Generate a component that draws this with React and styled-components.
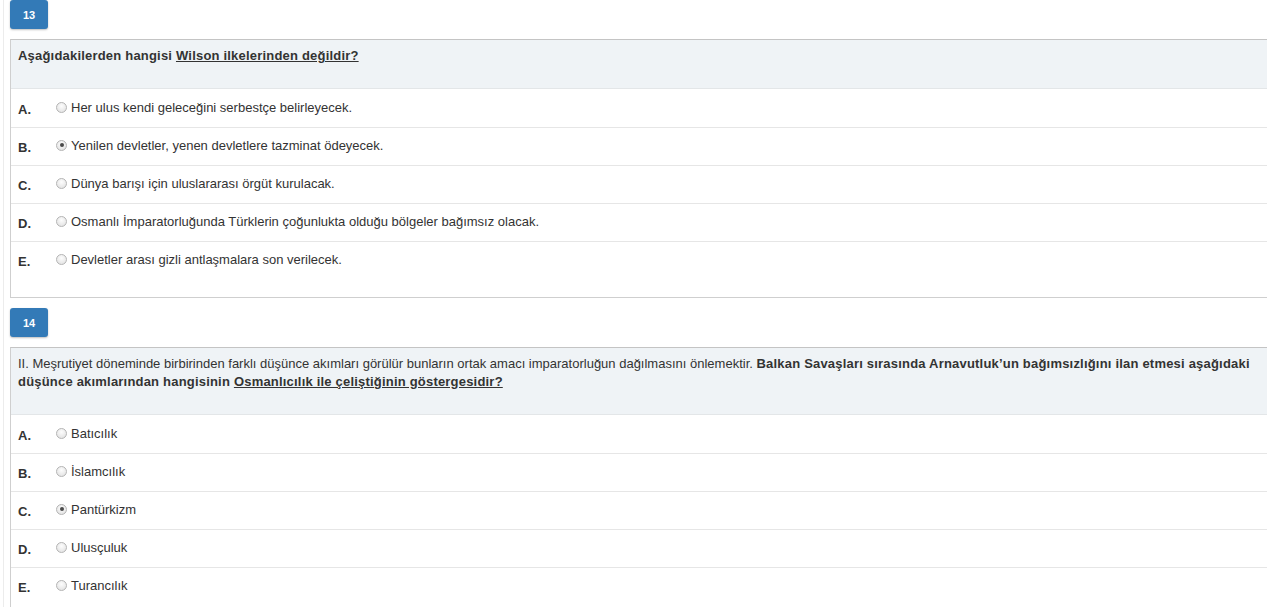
import React from "react";
import styled, { createGlobalStyle } from "styled-components";

const GlobalStyle = createGlobalStyle`
  html, body {
    margin: 0;
    padding: 0;
    background: #fff;
    overflow: hidden;
  }
  body {
    font-family: "Liberation Sans", Arial, sans-serif;
    color: #333;
  }
`;

const Page = styled.div`
  margin-left: 3px;
  padding-left: 6px;
  border-left: 1px solid #ececec;
  min-height: 607px;
`;

const Badge = styled.div`
  width: 38px;
  height: 29px;
  display: flex;
  align-items: center;
  justify-content: center;
  background: #337ab7;
  color: #fff;
  font-size: 11px;
  font-weight: bold;
  border-radius: 3px;
  box-shadow: 0 1px 2px rgba(0, 0, 0, 0.25);
  margin-bottom: 10px;
`;

const Panel = styled.div`
  width: 1300px;
  border: 1px solid #cfcfcf;
  border-top-color: #c4c4c4;
  padding-bottom: ${({ $pad }) => $pad}px;
  margin-bottom: 10px;
`;

const Question = styled.div`
  background: #eff3f6;
  border-bottom: 1px solid #e3e6e8;
  padding: 7px 30px 23px 7px;
  font-size: 13px;
  line-height: 18px;
  width: 1232px;
  box-sizing: content-box;
`;

const Strong = styled.b`
  font-weight: bold;
  letter-spacing: 0.2px;
  text-decoration: ${({ $u }) => ($u ? "underline" : "none")};
`;

const Row = styled.div`
  height: 37px;
  display: flex;
  align-items: center;
  padding-left: 7px;
  border-top: 1px solid ${({ $first }) => ($first ? "transparent" : "#e6e6e6")};
  font-size: 13px;
`;

const Letter = styled.span`
  width: 39px;
  font-size: 13px;
  font-weight: bold;
  color: #333;
  padding-top: 1px;
`;

const Radio = styled.span`
  width: 9px;
  height: 9px;
  border-radius: 50%;
  border: 1px solid #b4b4b4;
  background: radial-gradient(circle at 50% 35%, #fdfdfd 0%, #e4e4e4 80%);
  margin-right: 4px;
  margin-left: -1px;
  margin-top: -3px;
  display: flex;
  align-items: center;
  justify-content: center;
  &::after {
    content: "";
    width: 4px;
    height: 4px;
    border-radius: 50%;
    background: ${({ $checked }) => ($checked ? "#4a4a4a" : "transparent")};
  }
`;

const OptionText = styled.span`
  color: #333;
  margin-top: -3px;
`;

const questions = [
  {
    no: 13,
    pad: 18,
    text: (
      <>
        <Strong>Aşağıdakilerden hangisi </Strong>
        <Strong $u>Wilson ilkelerinden değildir?</Strong>
      </>
    ),
    options: [
      "Her ulus kendi geleceğini serbestçe belirleyecek.",
      "Yenilen devletler, yenen devletlere tazminat ödeyecek.",
      "Dünya barışı için uluslararası örgüt kurulacak.",
      "Osmanlı İmparatorluğunda Türklerin çoğunlukta olduğu bölgeler bağımsız olacak.",
      "Devletler arası gizli antlaşmalara son verilecek.",
    ],
    checked: 1,
  },
  {
    no: 14,
    pad: 18,
    text: (
      <>
        II. Meşrutiyet döneminde birbirinden farklı düşünce akımları görülür bunların ortak amacı
        imparatorluğun dağılmasını önlemektir.{" "}
        <Strong>
          Balkan Savaşları sırasında Arnavutluk’un bağımsızlığını ilan etmesi aşağıdaki düşünce
          akımlarından hangisinin{" "}
        </Strong>
        <Strong $u>Osmanlıcılık ile çeliştiğinin göstergesidir?</Strong>
      </>
    ),
    options: ["Batıcılık", "İslamcılık", "Pantürkizm", "Ulusçuluk", "Turancılık"],
    checked: 2,
  },
];

const letters = ["A.", "B.", "C.", "D.", "E."];

export default function App() {
  return (
    <>
      <GlobalStyle />
      <Page>
        {questions.map((q) => (
          <div key={q.no}>
            <Badge>{q.no}</Badge>
            <Panel $pad={q.pad}>
              <Question>{q.text}</Question>
              {q.options.map((opt, i) => (
                <Row key={i} $first={i === 0}>
                  <Letter>{letters[i]}</Letter>
                  <Radio $checked={i === q.checked} />
                  <OptionText>{opt}</OptionText>
                </Row>
              ))}
            </Panel>
          </div>
        ))}
      </Page>
    </>
  );
}
